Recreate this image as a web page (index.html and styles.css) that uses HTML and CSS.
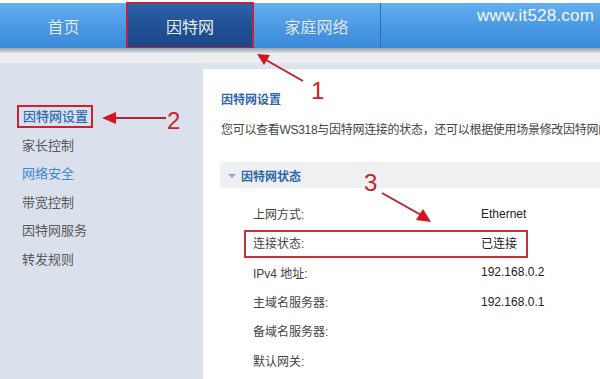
FILE: index.html
```html
<!DOCTYPE html>
<html lang="zh-CN">
<head>
<meta charset="utf-8">
<link rel="stylesheet" href="styles.css">
</head>
<body>
<div class="page">
  <header class="header">
    <nav class="nav">
      <a class="tab">首页</a>
      <a class="tab active">因特网</a>
      <a class="tab sep">家庭网络</a>
    </nav>
    <div class="site">www.it528.com</div>
  </header>
  <div class="shadow"></div>
  <div class="strip"></div>
  <div class="main">
    <aside class="sidebar">
      <div class="item blue"><span class="boxed">因特网设置</span></div>
      <div class="item">家长控制</div>
      <div class="item blue light">网络安全</div>
      <div class="item">带宽控制</div>
      <div class="item">因特网服务</div>
      <div class="item">转发规则</div>
    </aside>
    <section class="panel">
      <h1 class="title">因特网设置</h1>
      <p class="desc">您可以查看WS318与因特网连接的状态，还可以根据使用场景修改因特网的</p>
      <div class="section"><span class="caret"></span>因特网状态</div>
      <div class="rows">
        <div class="row"><span class="label">上网方式:</span><span class="value">Ethernet</span></div>
        <div class="row hl"><span class="label">连接状态:</span><span class="value">已连接</span></div>
        <div class="row"><span class="label">IPv4 地址:</span><span class="value">192.168.0.2</span></div>
        <div class="row"><span class="label">主域名服务器:</span><span class="value">192.168.0.1</span></div>
        <div class="row"><span class="label">备域名服务器:</span><span class="value"></span></div>
        <div class="row"><span class="label">默认网关:</span><span class="value"></span></div>
      </div>
    </section>
  </div>
  <svg class="notes" width="600" height="379" viewBox="0 0 600 379">
    <g stroke="#b8232b" stroke-width="2" fill="#d4141e">
      <line x1="303" y1="81" x2="266" y2="60"/>
      <polygon points="257,54 270,55 264,65" stroke="none"/>
      <line x1="166" y1="118" x2="113" y2="118"/>
      <polygon points="102,118 116,112 116,124" stroke="none"/>
      <line x1="382" y1="193" x2="421" y2="215"/>
      <polygon points="431,222 416,220 423,209" stroke="none"/>
    </g>
    <text x="311" y="99" class="num">1</text>
    <text x="167" y="129" class="num">2</text>
    <text x="364" y="191" class="num">3</text>
  </svg>
</div>
</body>
</html>
```

FILE: styles.css
```css
* { box-sizing: border-box; margin: 0; padding: 0; }
html, body { width: 600px; height: 379px; overflow: hidden; background: #fff; }
body {
  font-family: "Liberation Sans", "Noto Sans CJK SC", sans-serif;
  font-size: 12px;
  color: #444;
}
.page { position: relative; width: 600px; height: 379px; overflow: hidden; display: flex; flex-direction: column; }

.header {
  margin-top: 3px;
  height: 45px;
  background: linear-gradient(#63aff0, #4896e2 60%, #3c8bdb);
  display: flex;
  justify-content: space-between;
  flex: none;
}
.nav { display: flex; height: 100%; }
.tab {
  width: 127px;
  height: 100%;
  display: flex;
  align-items: center;
  justify-content: center;
  font-size: 16px;
  color: #e3edf8;
  text-shadow: 0 0 1px rgba(30,70,130,.4);
}
.tab.active {
  width: 126px;
  background: linear-gradient(#2d63ab, #1f4e93 60%, #1c4888);
  outline: 2px solid #b8283c;
  outline-offset: -1px;
  color: #e6eef8;
}
.tab.sep { width: 128px; border-right: 1px solid #2f6fb3; }
.site {
  font-size: 17px;
  color: #f4f8fc;
  padding: 3px 6px 0 0;
  letter-spacing: 0.2px;
}
.shadow { height: 5px; background: linear-gradient(#98a3ae, #d9dee3); flex: none; }
.strip { height: 10px; background: #eceef1; flex: none; }

.main { flex: 1; display: flex; background: #dde3eb; }
.sidebar { width: 203px; background: #dae1ec; padding-top: 40px; flex: none; }
.item {
  height: 28.5px;
  line-height: 28.5px;
  padding-left: 22px;
  font-size: 13px;
  color: #585858;
}
.item.blue { color: #2f6cb8; font-weight: 500; }
.item.light { color: #3f86d6; font-weight: normal; }
.item .boxed {
  display: inline-block;
  line-height: 19px;
  margin-left: -5px;
  padding: 0 3px 0 4px;
  border: 2px solid #cf2230;
}

.panel {
  flex: 1;
  margin-top: 6px;
  background: #fff;
  padding: 23px 0 0 18px;
  white-space: nowrap;
  overflow: hidden;
}
.title { font-size: 12px; line-height: 16px; color: #2d66aa; font-weight: bold; }
.desc { margin-top: 14px; font-size: 12px; line-height: 16px; color: #444; letter-spacing: -0.3px; }
.section {
  margin: 24px 0 0 -1px;
  height: 26px;
  background: #eef0f2;
  border-radius: 3px 0 0 3px;
  display: flex;
  align-items: center;
  padding-left: 8px;
  font-size: 12px;
  font-weight: bold;
  color: #2d66aa;
}
.caret {
  width: 0; height: 0;
  border-left: 4px solid transparent;
  border-right: 4px solid transparent;
  border-top: 4px solid #8ea3bd;
  margin-right: 5px;
  margin-top: 2px;
}
.rows { margin-top: 11px; }
.row {
  position: relative;
  width: 284px;
  margin-left: 23px;
  padding-left: 9px;
  height: 29.3px;
  display: flex;
  align-items: center;
  font-size: 12px;
  color: #333;
}
.row .label { width: 228px; flex: none; color: #444; }
.row .value { flex: none; color: #222; }
.row.hl::after {
  content: "";
  position: absolute;
  left: 0; right: 0; top: 2px; bottom: 0;
  border: 2px solid #c8303a;
}

.notes { position: absolute; left: 0; top: 0; }
.num { font-family: "Liberation Sans", sans-serif; font-size: 24px; fill: #c8242c; font-weight: normal; }
```
